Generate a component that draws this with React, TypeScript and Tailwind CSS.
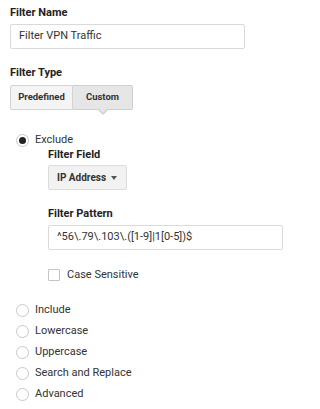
const font = { fontFamily: 'Roboto, "Liberation Sans", sans-serif' }

function Radio({ label, checked }: { label: string; checked?: boolean }) {
  return (
    <div className="flex h-[21px] items-center">
      <span className="flex h-[13px] w-[13px] items-center justify-center rounded-full border border-[#c8c8c8] bg-white">
        {checked && <span className="h-[7px] w-[7px] rounded-full bg-[#222]" />}
      </span>
      <span className="ml-[6px] text-[11px] text-[#333]">{label}</span>
    </div>
  )
}

export default function App() {
  return (
    <div className="h-[409px] w-[300px] bg-white pl-[10px] pt-[6px]" style={font}>
      <div className="text-[11px] font-bold leading-[14px] text-[#222]">Filter Name</div>
      <div className="mt-[4px] flex h-[25px] w-[235px] items-center rounded-[2px] border border-[#dadada] px-[8px] text-[11px] text-[#333]">
        Filter VPN Traffic
      </div>

      <div className="mt-[17px] text-[11px] font-bold leading-[14px] text-[#222]">Filter Type</div>
      <div className="mt-[5px] flex">
        <div className="flex h-[25px] w-[63px] items-center justify-center rounded-l-[2px] border border-[#d4d4d4] bg-[#f4f4f4] text-[9.5px] font-bold text-[#333]">
          Predefined
        </div>
        <div className="relative flex h-[25px] w-[60px] items-center justify-center rounded-r-[2px] border border-l-0 border-[#cfcfcf] bg-[#e6e6e6] text-[9.5px] font-bold text-[#333]">
          Custom
          <span className="absolute left-1/2 top-full h-0 w-0 -translate-x-1/2 border-x-[6px] border-t-[6px] border-x-transparent border-t-[#cfcfcf]" />
          <span className="absolute left-1/2 top-full -mt-[1px] h-0 w-0 -translate-x-1/2 border-x-[5px] border-t-[5px] border-x-transparent border-t-[#e6e6e6]" />
        </div>
      </div>

      <div className="ml-[6px] mt-[20px]">
        <Radio label="Exclude" checked />
        <div className="pl-[32px]">
          <div className="-mt-[3px] text-[11px] font-bold leading-[14px] text-[#222]">Filter Field</div>
          <div className="mt-[3px] flex h-[25px] w-[79px] items-center justify-between rounded-[2px] border border-[#dcdcdc] bg-[#f2f2f2] pl-[8px] pr-[9px] text-[10px] font-bold text-[#333]">
            IP Address
            <span className="h-0 w-0 border-x-[3.5px] border-t-[4px] border-x-transparent border-t-[#555]" />
          </div>
          <div className="mt-[17px] text-[11px] font-bold leading-[14px] text-[#222]">Filter Pattern</div>
          <div className="mt-[4px] flex h-[25px] w-[235px] items-center rounded-[2px] border border-[#dadada] px-[8px] text-[11px] text-[#333]">
            ^56\.79\.103\.([1-9]|1[0-5])$
          </div>
          <div className="mt-[17px] flex items-center">
            <span className="h-[12px] w-[12px] rounded-[1px] border border-[#c4c4c4] bg-white" />
            <span className="ml-[7px] text-[11px] text-[#333]">Case Sensitive</span>
          </div>
        </div>
        <div className="mt-[16px]">
          <Radio label="Include" />
          <Radio label="Lowercase" />
          <Radio label="Uppercase" />
          <Radio label="Search and Replace" />
          <Radio label="Advanced" />
        </div>
      </div>
    </div>
  )
}
